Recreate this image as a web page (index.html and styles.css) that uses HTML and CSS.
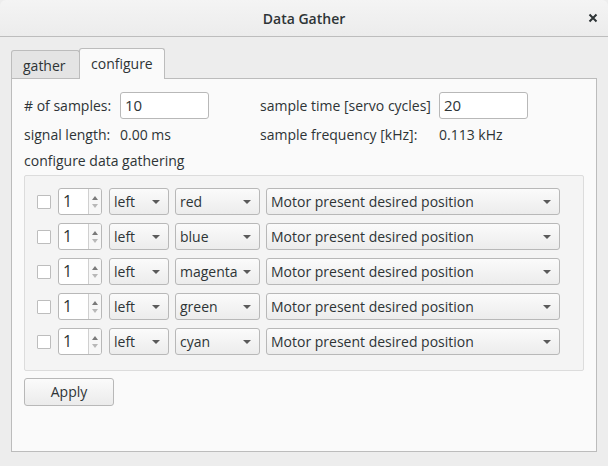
FILE: index.html
```html
<!DOCTYPE html>
<html>
<head>
<meta charset="utf-8">
<link rel="stylesheet" href="styles.css">
</head>
<body>
<div class="window">
  <div class="titlebar">
    <span class="title">Data Gather</span>
    <span class="close">
      <svg width="10" height="10" viewBox="0 0 10 10"><path d="M1.5 1.5 L8.5 8.5 M8.5 1.5 L1.5 8.5" stroke="#2e3436" stroke-width="2"/></svg>
    </span>
  </div>
  <div class="content">
    <div class="tabs">
      <div class="tab">gather</div>
      <div class="tab active">configure</div>
    </div>
    <div class="panel">
      <div class="params">
        <div class="pcell"><span class="lbl l1">#&nbsp;of samples:</span><span class="input">10</span></div>
        <div class="pcell"><span class="lbl l2">sample time [servo cycles]</span><span class="input">20</span></div>
        <div class="pcell"><span class="lbl l1">signal length:</span><span class="val">0.00 ms</span></div>
        <div class="pcell"><span class="lbl l2">sample frequency [kHz]:</span><span class="val">0.113 kHz</span></div>
      </div>
      <div class="section">configure data gathering</div>
      <div class="group">
        <div class="row">
          <span class="check"></span>
          <span class="spin"><span class="num">1</span><span class="arrows"><i class="up"></i><i class="down"></i></span></span>
          <span class="combo c-side">left<b></b></span>
          <span class="combo c-color">red<b></b></span>
          <span class="combo c-sig">Motor present desired position<b></b></span>
        </div>
        <div class="row">
          <span class="check"></span>
          <span class="spin"><span class="num">1</span><span class="arrows"><i class="up"></i><i class="down"></i></span></span>
          <span class="combo c-side">left<b></b></span>
          <span class="combo c-color">blue<b></b></span>
          <span class="combo c-sig">Motor present desired position<b></b></span>
        </div>
        <div class="row">
          <span class="check"></span>
          <span class="spin"><span class="num">1</span><span class="arrows"><i class="up"></i><i class="down"></i></span></span>
          <span class="combo c-side">left<b></b></span>
          <span class="combo c-color">magenta<b></b></span>
          <span class="combo c-sig">Motor present desired position<b></b></span>
        </div>
        <div class="row">
          <span class="check"></span>
          <span class="spin"><span class="num">1</span><span class="arrows"><i class="up"></i><i class="down"></i></span></span>
          <span class="combo c-side">left<b></b></span>
          <span class="combo c-color">green<b></b></span>
          <span class="combo c-sig">Motor present desired position<b></b></span>
        </div>
        <div class="row">
          <span class="check"></span>
          <span class="spin"><span class="num">1</span><span class="arrows"><i class="up"></i><i class="down"></i></span></span>
          <span class="combo c-side">left<b></b></span>
          <span class="combo c-color">cyan<b></b></span>
          <span class="combo c-sig">Motor present desired position<b></b></span>
        </div>
      </div>
      <div class="btnrow"><span class="button">Apply</span></div>
    </div>
  </div>
</div>
</body>
</html>
```
FILE: styles.css
```css
* { box-sizing: border-box; }
html, body { margin: 0; padding: 0; background: #ededed; }
body {
  width: 608px; height: 466px; overflow: hidden;
  font-family: "Open Sans", "DejaVu Sans", sans-serif;
  font-size: 14px; color: #2e3436;
}
.window {
  width: 608px; height: 466px; background: #ededed;
  border-radius: 6px 6px 0 0; overflow: hidden;
}
.titlebar {
  height: 37px; position: relative;
  background: linear-gradient(#f4f4f4, #ececec);
  border-bottom: 1px solid #bdbdbd;
  display: flex; align-items: center; justify-content: center;
}
.title { font-weight: 600; font-size: 14px; color: #2e3436; }
.close { position: absolute; right: 10px; top: 13px; width: 10px; height: 10px; display: flex; }
.content { padding: 11px 11px 14px 11px; }
.tabs { display: flex; align-items: flex-end; height: 30px; padding-left: 0; }
.tab {
  height: 29px; padding: 0 12px 0 11px;
  background: #e4e4e4; border: 1px solid #bcbcbc; border-bottom: none;
  border-radius: 3px 3px 0 0; line-height: 29px; color: #2e3436;
  margin-left: -1px;
}
.tab:first-child { margin-left: 0; height: 28px; line-height: 30px; width: 69px; }
.tab.active {
  height: 31px; line-height: 29px; background: #fafafa; position: relative; top: 1px;
  width: 86px; padding: 0 0 0 11px; z-index: 1;
}
.panel {
  background: #fafafa; border: 1px solid #bcbcbc;
  height: 374px; width: 586px; padding: 12px 12px 0 12px;
}
.params { display: grid; grid-template-columns: 236px 1fr; row-gap: 1px; }
.pcell { display: flex; align-items: center; height: 28px; }
.lbl { display: inline-block; }
.l1 { width: 96px; }
.l2 { width: 179px; }
.input {
  width: 89px; height: 27px; border: 1px solid #b8b8b8; border-radius: 3px;
  background: #fff; padding: 0 4px; line-height: 25px; font-size: 15px;
}
.section { margin-top: 3px; height: 20px; line-height: 20px; }
.group {
  margin-top: 4px; width: 560px; height: 196px;
  border: 1px solid #dcdcdc; border-radius: 2px; background: #f4f4f4;
  padding: 12px 0 0 12px; display: flex; flex-direction: column; gap: 8px;
}
.row { display: flex; align-items: center; height: 27px; }
.check {
  width: 14px; height: 14px; border: 1px solid #bdbdbd; background: #fff;
  border-radius: 1px; margin-right: 7px;
}
.spin {
  display: flex; width: 44px; height: 27px; border: 1px solid #b8b8b8;
  border-radius: 3px; background: #fff; margin-right: 7px; overflow: hidden;
}
.num { width: 30px; padding-left: 4px; line-height: 25px; font-size: 16px; }
.arrows {
  width: 13px; border-left: 1px solid #d0d0d0; background: #f7f7f7;
  display: flex; flex-direction: column; align-items: center; justify-content: center; gap: 4px;
}
.arrows i { display: block; width: 0; height: 0; border-left: 3.5px solid transparent; border-right: 3.5px solid transparent; }
.arrows .up { border-bottom: 4px solid #7a7a7a; }
.arrows .down { border-top: 4px solid #b8b8b8; }
.combo {
  position: relative; height: 27px; border: 1px solid #b8b8b8; border-radius: 3px;
  background: linear-gradient(#fbfbfb, #ececec); line-height: 25px; padding-left: 4px;
  margin-right: 6px;
}
.combo b {
  position: absolute; right: 8px; top: 11px; width: 0; height: 0;
  border-left: 4px solid transparent; border-right: 4px solid transparent;
  border-top: 4px solid #5a5a5a;
}
.c-side { width: 60px; }
.c-color { width: 85px; }
.c-sig { width: 294px; }
.btnrow { margin-top: 7px; }
.button {
  display: inline-block; width: 90px; height: 28px; border: 1px solid #b8b8b8; border-radius: 3px;
  background: linear-gradient(#fbfbfb, #ebebeb); text-align: center; line-height: 26px;
}
```
